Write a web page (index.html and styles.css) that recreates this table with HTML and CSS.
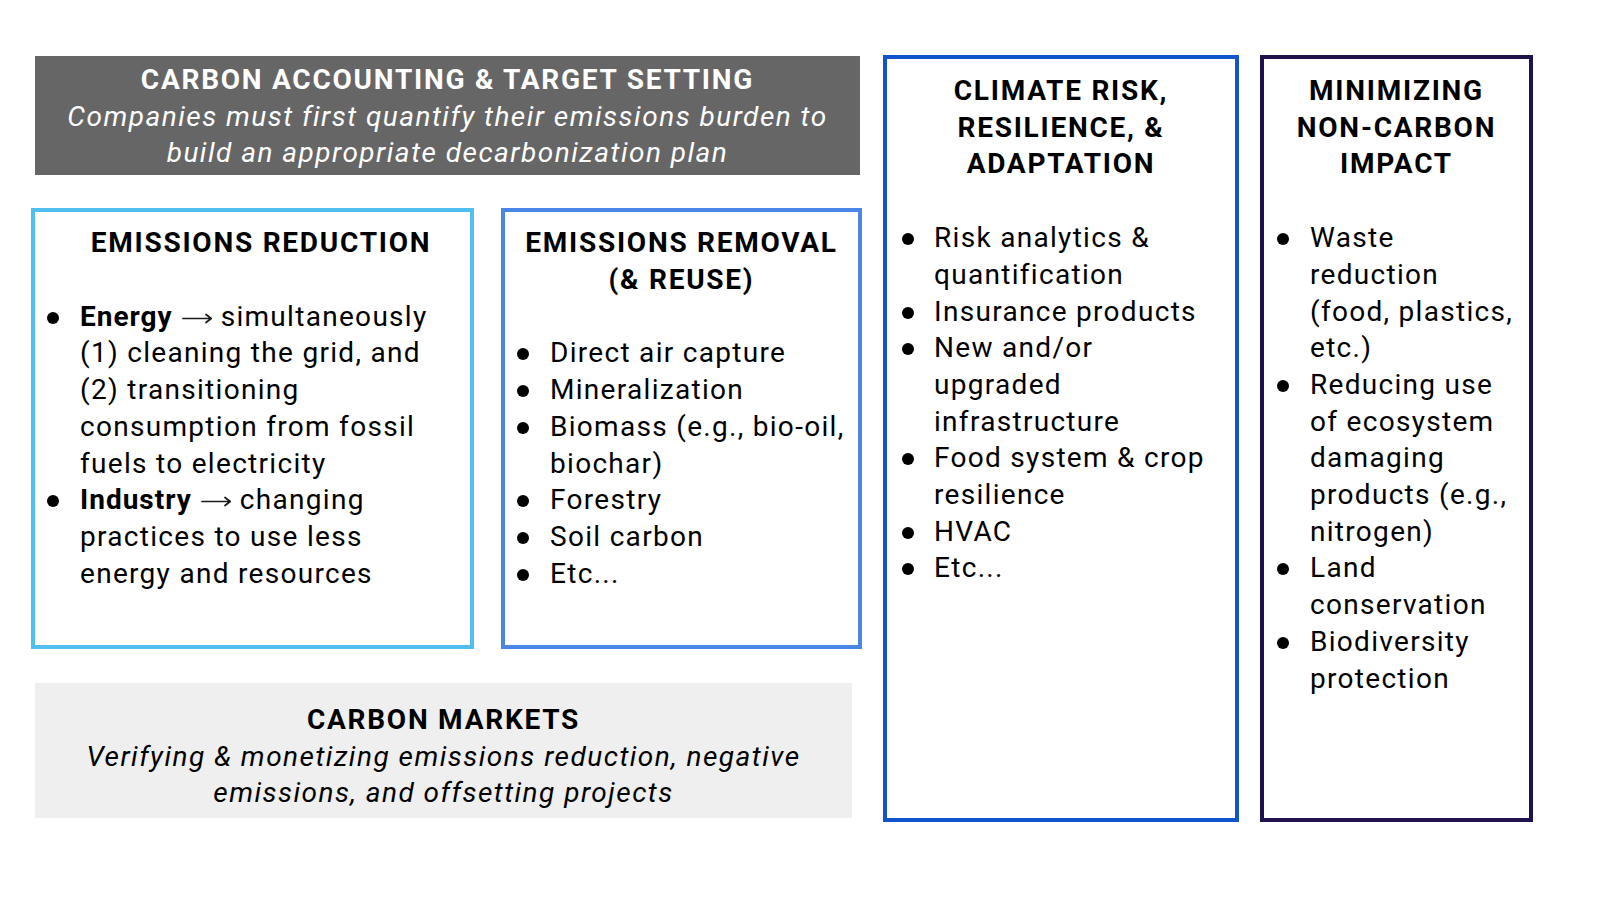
FILE: index.html
```html
<!DOCTYPE html>
<html lang="en">
<head>
<meta charset="utf-8">
<title>Climate solutions landscape</title>
<link rel="stylesheet" href="styles.css">
</head>
<body>
<main class="board">
  <section class="left">
    <header class="banner banner--dark">
      <h2 class="banner__title">CARBON ACCOUNTING &amp; TARGET SETTING</h2>
      <p class="banner__text">Companies must first quantify their emissions burden to build an appropriate decarbonization plan</p>
    </header>

    <div class="pair">
      <article class="card card--reduction">
        <h3 class="card__title">EMISSIONS REDUCTION</h3>
        <ul class="card__list">
          <li><b class="lead">Energy</b><svg class="arrow" viewBox="0 0 31 12" aria-hidden="true"><path d="M1 6.5H29M24 2.5L29.2 6.5L24 10.5"/></svg>simultaneously (1) cleaning the grid, and (2) transitioning consumption from fossil fuels to electricity</li>
          <li><b class="lead">Industry</b><svg class="arrow" viewBox="0 0 31 12" aria-hidden="true"><path d="M1 6.5H29M24 2.5L29.2 6.5L24 10.5"/></svg>changing practices to use less energy and resources</li>
        </ul>
      </article>

      <article class="card card--removal">
        <h3 class="card__title">EMISSIONS REMOVAL<br>(&amp; REUSE)</h3>
        <ul class="card__list">
          <li>Direct air capture</li>
          <li>Mineralization</li>
          <li>Biomass (e.g., bio-oil, biochar)</li>
          <li>Forestry</li>
          <li>Soil carbon</li>
          <li>Etc...</li>
        </ul>
      </article>
    </div>

    <footer class="banner banner--light">
      <h2 class="banner__title">CARBON MARKETS</h2>
      <p class="banner__text">Verifying &amp; monetizing emissions reduction, negative emissions, and offsetting projects</p>
    </footer>
  </section>

  <article class="card card--tall card--risk">
    <h3 class="card__title">CLIMATE RISK,<br>RESILIENCE, &amp;<br>ADAPTATION</h3>
    <ul class="card__list">
      <li>Risk analytics &amp; quantification</li>
      <li>Insurance products</li>
      <li>New and/or upgraded infrastructure</li>
      <li>Food system &amp; crop resilience</li>
      <li>HVAC</li>
      <li>Etc...</li>
    </ul>
  </article>

  <article class="card card--tall card--impact">
    <h3 class="card__title">MINIMIZING<br>NON-CARBON<br>IMPACT</h3>
    <ul class="card__list">
      <li>Waste reduction (food, plastics, etc.)</li>
      <li>Reducing use<br>of ecosystem damaging products (e.g., nitrogen)</li>
      <li>Land conservation</li>
      <li>Biodiversity protection</li>
    </ul>
  </article>
</main>
</body>
</html>
```

FILE: styles.css
```css
* {
  box-sizing: border-box;
}

html,
body {
  margin: 0;
  padding: 0;
  background: #ffffff;
}

body {
  width: 1600px;
  height: 900px;
  overflow: hidden;
  font-family: Roboto, "Liberation Sans", Arial, sans-serif;
  font-size: 28px;
  line-height: 36.7px;
  letter-spacing: 1.3px;
  color: #000000;
}

.board {
  display: flex;
  align-items: flex-start;
  gap: 21px;
  padding: 55px 0 0 31px;
}

/* ---------- left column ---------- */

.left {
  width: 831px;
  display: flex;
  flex-direction: column;
}

.banner {
  text-align: center;
}

.banner__title {
  margin: 0;
  font-size: 28px;
  font-weight: 700;
  letter-spacing: 1.75px;
}

.banner__text {
  margin: 0;
  font-style: italic;
  letter-spacing: 1.48px;
}

.banner--dark {
  width: 825px;
  height: 119px;
  margin: 1px 0 0 4px;
  padding: 6px 20px 0;
  background: #666666;
  color: #ffffff;
}

.banner--light {
  width: 817px;
  height: 135px;
  margin: 34px 0 0 4px;
  padding: 19px 24px 0;
  background: #efefef;
  color: #000000;
}

.pair {
  display: flex;
  gap: 27px;
  margin-top: 33px;
}

/* ---------- cards ---------- */

.card {
  border: 4px solid #000;
  background: #ffffff;
  padding-top: 13px;
}

.card__title {
  margin: 0 0 37px;
  font-size: 28px;
  font-weight: 700;
  letter-spacing: 1.75px;
  text-align: center;
}

.card__list {
  list-style: none;
  margin: 0;
  padding: 0;
}

.card__list li {
  position: relative;
  padding-left: 33px;
}

.card__list li::before {
  content: "";
  position: absolute;
  left: 0;
  top: 13px;
  width: 12px;
  height: 12px;
  border-radius: 50%;
  background: #000000;
}

.lead {
  letter-spacing: 1px;
}

.arrow {
  width: 31px;
  height: 12px;
  margin: 0 8px 0 9px;
  vertical-align: 2px;
  fill: none;
  stroke: #1a1a1a;
  stroke-width: 1.7;
  stroke-linecap: round;
  stroke-linejoin: round;
}

.card--reduction {
  width: 443px;
  height: 441px;
  padding-left: 12px;
  padding-right: 20px;
  border-color: #50bff0;
}

.card--reduction .card__title {
  margin-left: -12px;
  margin-right: -20px;
  padding-left: 17px;
}

.card--removal {
  width: 361px;
  height: 441px;
  padding-left: 12px;
  padding-right: 4px;
  border-color: #4a86e8;
}

.card--removal .card__title {
  margin-left: -12px;
  margin-right: -4px;
}

.card--tall {
  height: 767px;
  padding-top: 14px;
  padding-left: 15px;
}

.card--risk {
  width: 356px;
  padding-right: 16px;
  border-color: #1155cc;
}

.card--risk .card__title {
  margin-left: -15px;
  margin-right: -16px;
}

.card--risk .card__list li {
  padding-left: 32px;
}

.card--impact {
  width: 273px;
  padding-left: 13px;
  padding-right: 6px;
  border-color: #20124d;
}

.card--impact .card__title {
  margin-left: -13px;
  margin-right: -6px;
}
```
